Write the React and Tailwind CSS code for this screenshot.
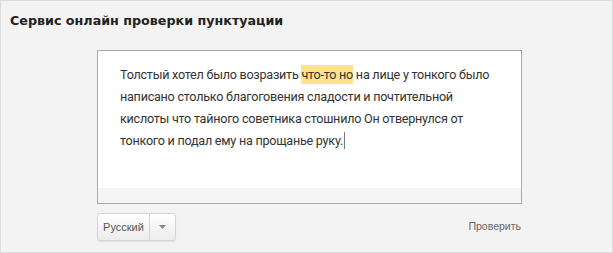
import React from 'react';

const Caret = () => (
  <svg width="7" height="4" viewBox="0 0 7 4" className="block">
    <path d="M0 0h7L3.5 4z" fill="#888" />
  </svg>
);

const App = () => {
  return (
    <div className="w-[613px] h-[253px] bg-[#f3f3f3] border border-[#dcdcdc] overflow-hidden">
      <h1 className="pl-[9px] pt-[11px] text-[12.7px] leading-[18px] font-bold text-[#222] font-['DejaVu_Sans',Verdana,sans-serif]">
        Сервис онлайн проверки пунктуации
      </h1>

      <div className="ml-[96px] mt-[20px] w-[425px] h-[154px] border border-[#a9a9a9] bg-white flex flex-col">
        <div className="flex-1 pl-[22px] pt-[13px] text-[12.6px] leading-[22px] tracking-[-0.25px] text-[#333] font-['Roboto',Arial,sans-serif] whitespace-nowrap">
          Толстый хотел было возразить{' '}
          <span className="bg-[#ffe38a] py-[2px]">что-то но</span> на лице у тонкого было
          <br />
          написано столько благоговения сладости и почтительной
          <br />
          кислоты что тайного советника стошнило Он отвернулся от
          <br />
          тонкого и подал ему на прощанье руку.
          <span className="inline-block w-px h-[17px] bg-[#777] align-[-4px] ml-px" />
        </div>
        <div className="h-[15px] bg-[#f5f5f5]" />
      </div>

      <div className="ml-[96px] mt-[9px] w-[425px] flex items-center justify-between font-['Liberation_Sans',Arial,sans-serif]">
        <div className="flex h-[28px] rounded-[3px] border border-[#d4d4d4] bg-gradient-to-b from-white to-[#ececec] shadow-[0_1px_1px_rgba(0,0,0,0.08)]">
          <div className="w-[52px] flex items-center justify-center text-[11px] text-[#555] border-r border-[#d4d4d4]">
            Русский
          </div>
          <div className="w-[25px] flex items-center justify-center">
            <Caret />
          </div>
        </div>
        <span className="text-[10.5px] text-[#666] pr-[1px]">Проверить</span>
      </div>
    </div>
  );
};

export default App;
